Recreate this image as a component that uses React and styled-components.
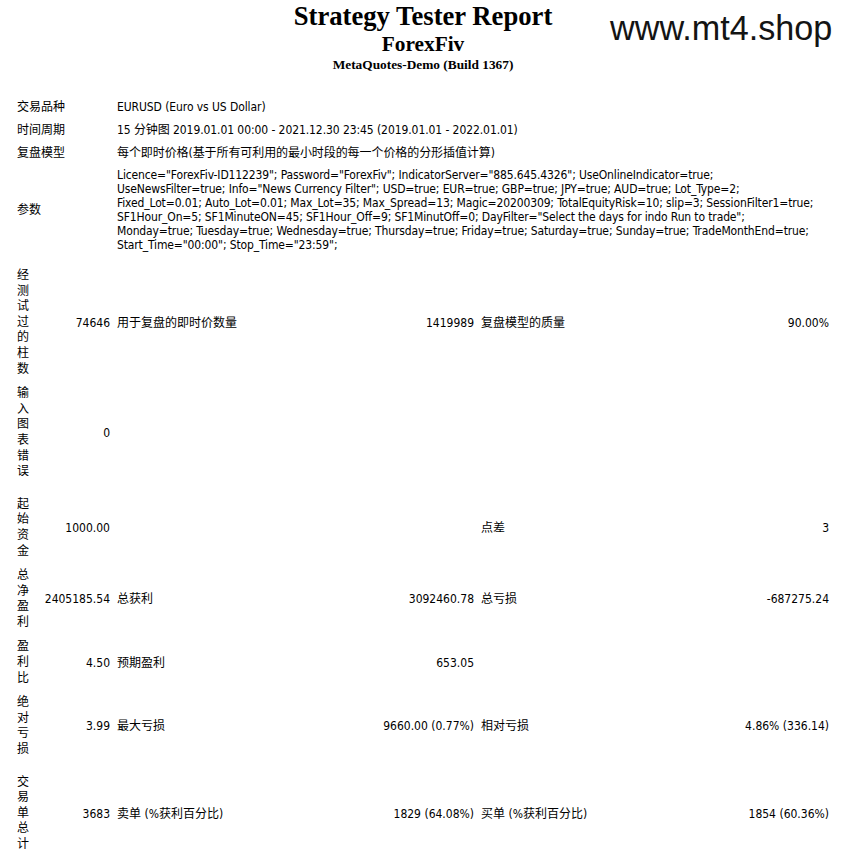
import React from "react";
import styled, { createGlobalStyle } from "styled-components";

const GlobalStyle = createGlobalStyle`
  body {
    margin: 0;
    background: #ffffff;
    color: #000000;
    font-family: "DejaVu Sans Condensed", "Noto Sans CJK SC", sans-serif;
    font-size: 12px;
  }
`;

const Page = styled.div`
  position: relative;
  width: 846px;
  padding-top: 1px;
  padding-bottom: 8px;
`;

const Header = styled.div`
  text-align: center;
  font-family: "Liberation Serif", "Times New Roman", serif;
  font-weight: bold;
  margin-bottom: 23px;
`;

const HeaderLine = styled.div`
  font-size: ${(p) => p.$size}px;
`;

const Watermark = styled.div`
  position: absolute;
  top: 9px;
  left: 610px;
  font-family: "Liberation Sans", Arial, sans-serif;
  font-size: 34.2px;
  color: #141414;
`;

const ReportGrid = styled.div`
  display: grid;
  grid-template-columns: 18px 80px 186px 176px 172px 181px;
  column-gap: 1px;
  row-gap: 1px;
  margin-left: 14px;
`;

const InfoLabel = styled.div`
  grid-column: span 2;
  align-self: center;
  padding: 3px;
  line-height: 16px;
`;

const InfoValue = styled.div`
  grid-column: span 4;
  align-self: center;
  padding: 3px;
  line-height: ${(p) => (p.$dense ? 14 : 16)}px;
  letter-spacing: ${(p) => (p.$dense ? -0.13 : -0.08)}px;
  white-space: nowrap;
`;

const Spacer = styled.div`
  grid-column: 1 / -1;
  height: 7px;
`;

const StackedLabel = styled.div`
  align-self: center;
  padding: 4px 3px;
  line-height: 15.6px;
  word-break: break-all;
`;

const Cell = styled.div`
  align-self: center;
  padding: 0 3px;
  line-height: 14px;
  text-align: ${(p) => p.$align || "left"};
  white-space: nowrap;
`;

const info = [
  ["交易品种", "EURUSD (Euro vs US Dollar)"],
  ["时间周期", "15 分钟图 2019.01.01 00:00 - 2021.12.30 23:45 (2019.01.01 - 2022.01.01)"],
  ["复盘模型", "每个即时价格(基于所有可利用的最小时段的每一个价格的分形插值计算)"],
];

const params = [
  'Licence="ForexFiv-ID112239"; Password="ForexFiv"; IndicatorServer="885.645.4326"; UseOnlineIndicator=true;',
  'UseNewsFilter=true; Info="News Currency Filter"; USD=true; EUR=true; GBP=true; JPY=true; AUD=true; Lot_Type=2;',
  "Fixed_Lot=0.01; Auto_Lot=0.01; Max_Lot=35; Max_Spread=13; Magic=20200309; TotalEquityRisk=10; slip=3; SessionFilter1=true;",
  'SF1Hour_On=5; SF1MinuteON=45; SF1Hour_Off=9; SF1MinutOff=0; DayFilter="Select the days for indo Run to trade";',
  "Monday=true; Tuesday=true; Wednesday=true; Thursday=true; Friday=true; Saturday=true; Sunday=true; TradeMonthEnd=true;",
  'Start_Time="00:00"; Stop_Time="23:59";',
];

// null marks a spacer row
const stats = [
  null,
  ["经测试过的柱数", "74646", "用于复盘的即时价数量", "1419989", "复盘模型的质量", "90.00%"],
  ["输入图表错误", "0", "", "", "", ""],
  null,
  ["起始资金", "1000.00", "", "", "点差", "3"],
  ["总净盈利", "2405185.54", "总获利", "3092460.78", "总亏损", "-687275.24"],
  ["盈利比", "4.50", "预期盈利", "653.05", "", ""],
  ["绝对亏损", "3.99", "最大亏损", "9660.00 (0.77%)", "相对亏损", "4.86% (336.14)"],
  null,
  ["交易单总计", "3683", "卖单 (%获利百分比)", "1829 (64.08%)", "买单 (%获利百分比)", "1854 (60.36%)"],
];

const App = () => {
  return (
    <Page>
      <GlobalStyle />
      <Header>
        <HeaderLine $size={26.67}>Strategy Tester Report</HeaderLine>
        <HeaderLine $size={21.33}>ForexFiv</HeaderLine>
        <HeaderLine $size={13.33}>MetaQuotes-Demo (Build 1367)</HeaderLine>
      </Header>
      <Watermark>www.mt4.shop</Watermark>

      <ReportGrid>
        {info.map(([label, value]) => (
          <React.Fragment key={label}>
            <InfoLabel>{label}</InfoLabel>
            <InfoValue>{value}</InfoValue>
          </React.Fragment>
        ))}
        <InfoLabel>参数</InfoLabel>
        <InfoValue $dense>
          {params.map((line, i) => (
            <div key={i}>{line}</div>
          ))}
        </InfoValue>

        {stats.map((row, i) =>
          row === null ? (
            <Spacer key={i} />
          ) : (
            <React.Fragment key={i}>
              <StackedLabel>{row[0]}</StackedLabel>
              <Cell $align="right">{row[1]}</Cell>
              <Cell>{row[2]}</Cell>
              <Cell $align="right">{row[3]}</Cell>
              <Cell>{row[4]}</Cell>
              <Cell $align="right">{row[5]}</Cell>
            </React.Fragment>
          )
        )}
      </ReportGrid>
    </Page>
  );
};

export default App;
